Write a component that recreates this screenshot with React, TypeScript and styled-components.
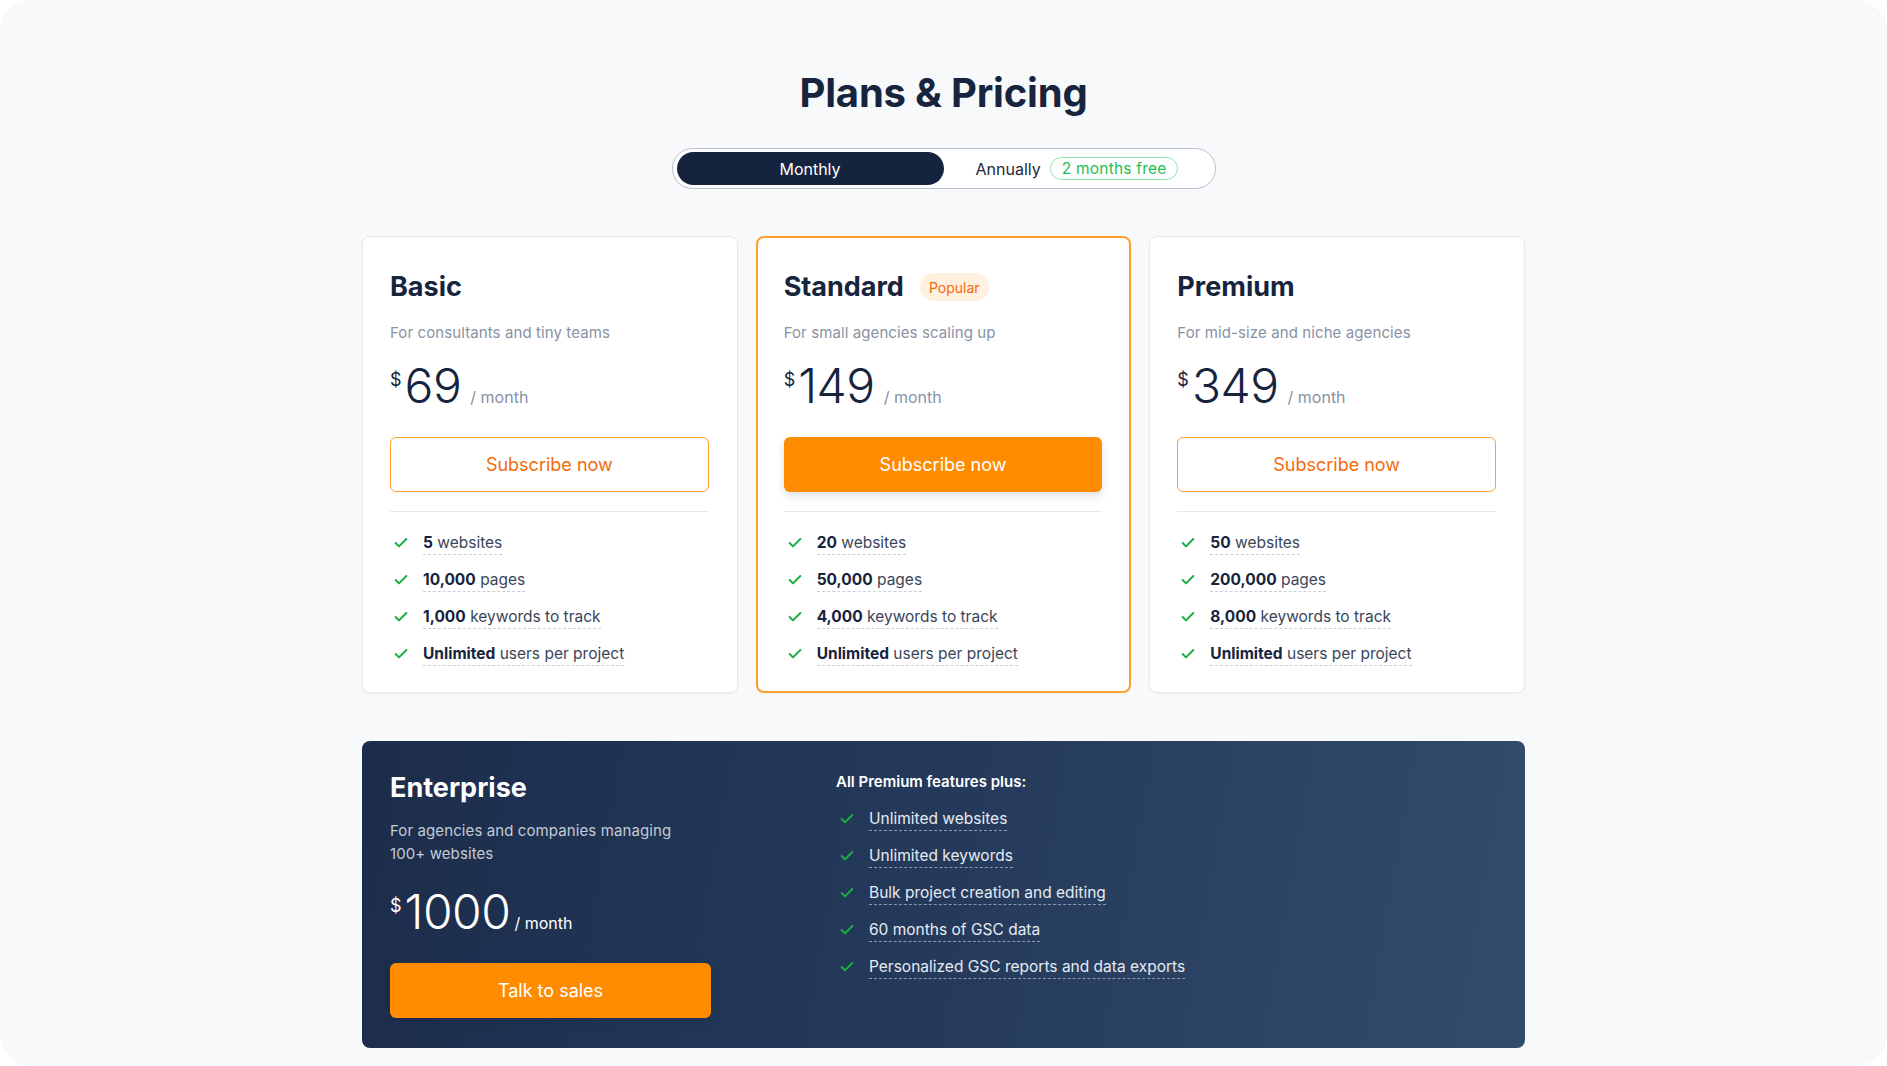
import * as React from 'react';
import styled, { createGlobalStyle, css } from 'styled-components';

const GlobalStyle = createGlobalStyle`
    * { box-sizing: border-box; }
    html, body {
        margin: 0;
        padding: 0;
        background: #ffffff;
    }
    body {
        font-family: Inter, 'Noto Sans', 'Liberation Sans', sans-serif;
        color: #16243d;
        -webkit-font-smoothing: antialiased;
    }
`;

const navy = '#16243d';
const orange = '#ff8c00';
const green = '#1cae43';

const Page = styled.div`
    width: 1887px;
    height: 1066px;
    background: #f7f9fb;
    border-radius: 32px;
    display: flex;
    flex-direction: column;
    align-items: center;
    padding-top: 69px;
    overflow: hidden;
`;

const Title = styled.h1`
    margin: 0;
    font-size: 40px;
    line-height: 48px;
    font-weight: 700;
    color: ${navy};
    letter-spacing: -0.2px;
`;

const Toggle = styled.div`
    margin-top: 31px;
    width: 544px;
    height: 41px;
    padding: 3px 4px;
    border: 1px solid #b7c0ce;
    border-radius: 999px;
    background: #ffffff;
    display: grid;
    grid-template-columns: 267px 1fr;
`;

const ToggleOption = styled.div<{ active?: boolean }>`
    display: flex;
    align-items: center;
    justify-content: center;
    gap: 9px;
    border-radius: 999px;
    font-size: 16px;
    color: #1e293b;
    ${(p) =>
        p.active &&
        css`
            background: #15233e;
            color: #ffffff;
        `}
`;

const FreeBadge = styled.span`
    display: inline-flex;
    align-items: center;
    height: 23px;
    padding: 0 11px;
    border: 1px solid #8fe3ad;
    border-radius: 999px;
    color: #1ebd52;
    font-size: 15.5px;
    letter-spacing: 0.2px;
`;

const Cards = styled.div`
    margin-top: 47px;
    width: 1163px;
    display: grid;
    grid-template-columns: repeat(3, 1fr);
    gap: 18px;
`;

const Card = styled.div<{ popular?: boolean }>`
    background: #ffffff;
    border: 1px solid #e6e9ee;
    border-radius: 8px;
    padding: 33px 28px 26px 27px;
    box-shadow: 0 1px 3px rgba(20, 35, 60, 0.04);
    display: flex;
    flex-direction: column;
    ${(p) =>
        p.popular &&
        css`
            border: 2px solid #ff9d2e;
            padding: 32px 27px 25px 26px;
        `}
`;

const CardHead = styled.div`
    display: flex;
    align-items: center;
    gap: 16px;
    height: 34px;
`;

const PlanName = styled.h2<{ light?: boolean }>`
    margin: 0;
    font-size: 27px;
    line-height: 34px;
    font-weight: 700;
    color: ${(p) => (p.light ? '#ffffff' : navy)};
`;

const PopularBadge = styled.span`
    display: inline-flex;
    align-items: center;
    height: 28px;
    padding: 0 9px;
    border-radius: 999px;
    background: #fff0e0;
    color: #f2690c;
    font-size: 14px;
`;

const Description = styled.p<{ light?: boolean }>`
    margin: ${(p) => (p.light ? '14px' : '17px')} 0 0;
    font-size: 15px;
    line-height: 23px;
    letter-spacing: 0.1px;
    color: ${(p) => (p.light ? '#c3cbd7' : '#8792a5')};
`;

const PriceRow = styled.div<{ light?: boolean; tight?: boolean }>`
    margin-top: ${(p) => (p.tight ? '23px' : '18px')};
    display: flex;
    align-items: baseline;
    color: ${(p) => (p.light ? '#ffffff' : navy)};
`;

const Currency = styled.span`
    align-self: flex-start;
    margin-top: 9px;
    margin-right: 3px;
    font-size: 18px;
    line-height: 1;
    font-weight: 400;
`;

const Amount = styled.span`
    font-size: 48px;
    line-height: 48px;
    font-weight: 300;
    letter-spacing: -0.5px;
`;

const Period = styled.span<{ light?: boolean; tight?: boolean }>`
    margin-left: ${(p) => (p.tight ? '4px' : '9px')};
    font-size: 16px;
    color: ${(p) => (p.light ? '#ffffff' : '#8792a5')};
`;

const Button = styled.button<{ filled?: boolean }>`
    margin-top: 27px;
    width: 100%;
    height: 55px;
    border-radius: 6px;
    font-family: inherit;
    font-size: 18px;
    cursor: pointer;
    border: 1.5px solid #ffa033;
    background: #ffffff;
    color: #f56a0a;
    ${(p) =>
        p.filled &&
        css`
            border: none;
            background: ${orange};
            color: #ffffff;
            box-shadow: 0 4px 8px rgba(20, 35, 60, 0.14);
        `}
`;

const Divider = styled.hr`
    margin: 19px 0 0;
    border: none;
    border-top: 1px solid #e5e8ed;
`;

const FeatureList = styled.ul<{ compact?: boolean }>`
    list-style: none;
    margin: ${(p) => (p.compact ? '15px' : '20px')} 0 0;
    padding: 0;
    display: flex;
    flex-direction: column;
    gap: 14px;
`;

const FeatureItem = styled.li`
    display: flex;
    align-items: flex-start;
    gap: 14px;
    padding-left: 3px;
`;

const CheckIcon = styled.svg`
    flex: none;
    width: 16px;
    height: 16px;
    margin-top: 3px;
`;

const FeatureText = styled.span<{ light?: boolean }>`
    font-size: 15.5px;
    line-height: 22px;
    border-bottom: 1px dashed ${(p) => (p.light ? '#8898ae' : '#c9d0db')};
    color: ${(p) => (p.light ? '#e6ebf2' : '#3a4558')};

    b {
        font-weight: 700;
        color: ${navy};
    }
`;

const Enterprise = styled.div`
    margin-top: 48px;
    width: 1163px;
    height: 307px;
    border-radius: 8px;
    padding: 30px 28px 28px;
    background: linear-gradient(100deg, #1c2d4b 0%, #253a5b 50%, #324c6e 100%);
    display: flex;
    gap: 125px;
`;

const EnterpriseInfo = styled.div`
    width: 321px;
    display: flex;
    flex-direction: column;
`;

const EnterpriseFeatures = styled.div`
    display: flex;
    flex-direction: column;
`;

const FeaturesHeading = styled.div`
    font-size: 15px;
    line-height: 22px;
    font-weight: 600;
    color: #ffffff;
`;

const Check = () => (
    <CheckIcon viewBox="0 0 24 24" fill="none" stroke={green} strokeWidth={3} strokeLinecap="round" strokeLinejoin="round">
        <polyline points="20 6 9 17 4 12" />
    </CheckIcon>
);

type Plan = {
    name: string;
    description: string;
    price: string;
    popular?: boolean;
    features: [string, string][];
};

const plans: Plan[] = [
    {
        name: 'Basic',
        description: 'For consultants and tiny teams',
        price: '69',
        features: [
            ['5', 'websites'],
            ['10,000', 'pages'],
            ['1,000', 'keywords to track'],
            ['Unlimited', 'users per project'],
        ],
    },
    {
        name: 'Standard',
        description: 'For small agencies scaling up',
        price: '149',
        popular: true,
        features: [
            ['20', 'websites'],
            ['50,000', 'pages'],
            ['4,000', 'keywords to track'],
            ['Unlimited', 'users per project'],
        ],
    },
    {
        name: 'Premium',
        description: 'For mid-size and niche agencies',
        price: '349',
        features: [
            ['50', 'websites'],
            ['200,000', 'pages'],
            ['8,000', 'keywords to track'],
            ['Unlimited', 'users per project'],
        ],
    },
];

const enterpriseFeatures = [
    'Unlimited websites',
    'Unlimited keywords',
    'Bulk project creation and editing',
    '60 months of GSC data',
    'Personalized GSC reports and data exports',
];

const PlanCard = ({ plan }: { plan: Plan }) => (
    <Card popular={plan.popular}>
        <CardHead>
            <PlanName>{plan.name}</PlanName>
            {plan.popular && <PopularBadge>Popular</PopularBadge>}
        </CardHead>
        <Description>{plan.description}</Description>
        <PriceRow>
            <Currency>$</Currency>
            <Amount>{plan.price}</Amount>
            <Period>/ month</Period>
        </PriceRow>
        <Button filled={plan.popular}>Subscribe now</Button>
        <Divider />
        <FeatureList>
            {plan.features.map(([strong, rest]) => (
                <FeatureItem key={rest}>
                    <Check />
                    <FeatureText>
                        <b>{strong}</b> {rest}
                    </FeatureText>
                </FeatureItem>
            ))}
        </FeatureList>
    </Card>
);

const App = () => (
    <>
        <GlobalStyle />
        <Page>
            <Title>Plans &amp; Pricing</Title>
            <Toggle>
                <ToggleOption active>Monthly</ToggleOption>
                <ToggleOption>
                    Annually <FreeBadge>2 months free</FreeBadge>
                </ToggleOption>
            </Toggle>
            <Cards>
                {plans.map((plan) => (
                    <PlanCard key={plan.name} plan={plan} />
                ))}
            </Cards>
            <Enterprise>
                <EnterpriseInfo>
                    <PlanName light>Enterprise</PlanName>
                    <Description light>
                        For agencies and companies managing
                        <br />
                        100+ websites
                    </Description>
                    <PriceRow light tight>
                        <Currency>$</Currency>
                        <Amount>1000</Amount>
                        <Period light tight>
                            / month
                        </Period>
                    </PriceRow>
                    <Button filled>Talk to sales</Button>
                </EnterpriseInfo>
                <EnterpriseFeatures>
                    <FeaturesHeading>All Premium features plus:</FeaturesHeading>
                    <FeatureList compact>
                        {enterpriseFeatures.map((f) => (
                            <FeatureItem key={f}>
                                <Check />
                                <FeatureText light>{f}</FeatureText>
                            </FeatureItem>
                        ))}
                    </FeatureList>
                </EnterpriseFeatures>
            </Enterprise>
        </Page>
    </>
);

export default App;
